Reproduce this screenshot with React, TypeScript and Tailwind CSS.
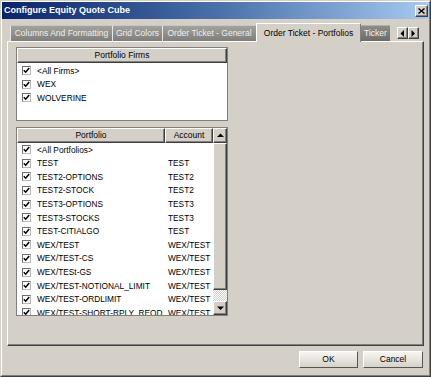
import React from 'react'

const firms = ['<All Firms>', 'WEX', 'WOLVERINE']

const portfolios: [string, string][] = [
  ['<All Portfolios>', ''],
  ['TEST', 'TEST'],
  ['TEST2-OPTIONS', 'TEST2'],
  ['TEST2-STOCK', 'TEST2'],
  ['TEST3-OPTIONS', 'TEST3'],
  ['TEST3-STOCKS', 'TEST3'],
  ['TEST-CITIALGO', 'TEST'],
  ['WEX/TEST', 'WEX/TEST'],
  ['WEX/TEST-CS', 'WEX/TEST'],
  ['WEX/TESt-GS', 'WEX/TEST'],
  ['WEX/TEST-NOTIONAL_LIMIT', 'WEX/TEST'],
  ['WEX/TEST-ORDLIMIT', 'WEX/TEST'],
  ['WEX/TEST-SHORT-RPLY_REQD', 'WEX/TEST'],
]

const tabs = [
  { label: 'Columns And Formatting', w: 'w-[102px]' },
  { label: 'Grid Colors', w: 'w-[50px]' },
  { label: 'Order Ticket - General', w: 'w-[94px]' },
]

const raised =
  'bg-[#d4d0c8] border border-t-white border-l-white border-r-[#404040] border-b-[#404040] shadow-[inset_-1px_-1px_#808080]'

function Check() {
  return (
    <span className="w-[9px] h-[9px] shrink-0 bg-white border border-t-[#6f6f6f] border-l-[#6f6f6f] border-r-[#b8b8b8] border-b-[#b8b8b8] flex items-center justify-center">
      <svg width="7" height="7" viewBox="0 0 7 7">
        <path d="M0.8 3.2 L2.7 5.2 L6.2 1" stroke="#000" strokeWidth="1.5" fill="none" />
      </svg>
    </span>
  )
}

function Arrow({ dir }: { dir: 'up' | 'down' | 'left' | 'right' }) {
  const pts = {
    up: '0,4 3.5,0.5 7,4',
    down: '0,0.5 3.5,4 7,0.5',
    left: '4,0 0.5,3.5 4,7',
    right: '0.5,0 4,3.5 0.5,7',
  }[dir]
  const vert = dir === 'up' || dir === 'down'
  return (
    <svg width={vert ? 7 : 5} height={vert ? 5 : 7} viewBox={vert ? '0 0 7 5' : '0 0 5 7'}>
      <polygon points={pts} fill="#000" />
    </svg>
  )
}

export default function App() {
  return (
    <div className="w-[431px] h-[377px] bg-[#d4d0c8] border border-t-[#d4d0c8] border-l-[#d4d0c8] border-r-[#404040] border-b-[#404040] font-['Liberation_Sans',Arial,sans-serif] text-black overflow-hidden">
      <div className="h-full flex flex-col border border-t-white border-l-white border-r-[#808080] border-b-[#808080]">
        {/* title bar */}
        <div className="h-[17px] shrink-0 flex items-center justify-between bg-gradient-to-r from-[#0a246a] via-[#4a6fa8] to-[#a6caf0] pl-[2px] pr-[1px]">
          <span className="text-white font-bold text-[9px] leading-none">Configure Equity Quote Cube</span>
          <span className={`w-[13px] h-[12px] flex items-center justify-center ${raised}`}>
            <svg width="7" height="6" viewBox="0 0 7 6">
              <path d="M0.5 0.5 L6.5 5.5 M6.5 0.5 L0.5 5.5" stroke="#000" strokeWidth="1.4" />
            </svg>
          </span>
        </div>

        <div className="px-[5px] mt-[4px] flex flex-col">
          {/* tab strip */}
          <div className="h-[18px] flex items-end pl-[3px] text-[8.5px] leading-none">
            {tabs.map((t) => (
              <div
                key={t.label}
                className={`${t.w} h-[16px] flex items-center justify-center bg-gradient-to-b from-[#a3a29d] to-[#7f7e79] text-[#eeeeee] border-l border-l-[#e8e8e8] border-t border-t-[#c8c6c0]`}
              >
                {t.label}
              </div>
            ))}
            <div className="relative z-10 w-[105px] h-[19px] -mb-[1px] flex items-center justify-center bg-[#d4d0c8] border-t border-l border-t-white border-l-white border-r border-r-[#808080]">
              Order Ticket - Portfolios
            </div>
            <div className="w-[29px] h-[16px] flex items-center justify-center bg-gradient-to-b from-[#8e8d88] to-[#6c6b67] text-[#f2f2f2] border-t border-t-[#b0aea8]">
              Ticker
            </div>
            <div className="ml-[7px] mb-[2px] flex">
              <span className={`w-[11px] h-[12px] flex items-center justify-center ${raised}`}>
                <Arrow dir="left" />
              </span>
              <span className={`w-[11px] h-[12px] flex items-center justify-center ${raised}`}>
                <Arrow dir="right" />
              </span>
            </div>
          </div>

          {/* tab panel */}
          <div className="h-[305px] border border-t-white border-l-white border-r-[#404040] border-b-[#404040] shadow-[inset_-1px_-1px_#808080] pt-[5px] pl-[8px] text-[8.5px] leading-none">
            {/* firms */}
            <div className="w-[212px] h-[74px] bg-white border border-[#7f7f7f] flex flex-col overflow-hidden">
              <div className={`h-[15px] shrink-0 flex items-center justify-center ${raised}`}>Portfolio Firms</div>
              <div className="pt-[1px]">
                {firms.map((f) => (
                  <div key={f} className="h-[13.5px] flex items-center pl-[5px] gap-[6px] text-[8.4px]">
                    <Check />
                    <span>{f}</span>
                  </div>
                ))}
              </div>
            </div>

            {/* portfolios */}
            <div className="w-[212px] h-[189px] mt-[6px] bg-white border border-[#7f7f7f] flex overflow-hidden">
              <div className="flex-1 flex flex-col min-w-0">
                <div className="h-[15px] shrink-0 flex">
                  <div className={`w-[148px] flex items-center justify-center ${raised}`}>Portfolio</div>
                  <div className={`flex-1 flex items-center justify-center ${raised}`}>Account</div>
                </div>
                <div className="text-[8.3px]">
                  {portfolios.map(([p, a]) => (
                    <div key={p} className="h-[13.6px] flex items-center">
                      <div className="w-[148px] flex items-center pl-[5px] gap-[6px] whitespace-nowrap">
                        <Check />
                        <span>{p}</span>
                      </div>
                      <div className="pl-[3px] whitespace-nowrap">{a}</div>
                    </div>
                  ))}
                </div>
              </div>
              <div className="w-[14px] shrink-0 flex flex-col bg-[repeating-conic-gradient(#ffffff_0_25%,#d4d0c8_0_50%)] bg-[length:2px_2px]">
                <span className={`h-[15px] shrink-0 flex items-center justify-center ${raised}`}>
                  <Arrow dir="up" />
                </span>
                <span className={`h-[147px] shrink-0 ${raised}`} />
                <span className="flex-1" />
                <span className={`h-[14px] shrink-0 flex items-center justify-center ${raised}`}>
                  <Arrow dir="down" />
                </span>
              </div>
            </div>
          </div>

          {/* buttons */}
          <div className="mt-[5px] pr-[1px] flex justify-end gap-[5px] text-[8.5px] leading-none">
            <button className="w-[59px] h-[17px] flex items-center justify-center bg-gradient-to-b from-[#f7f6f2] to-[#d6d2c8] border border-t-white border-l-white border-r-[#555] border-b-[#555]">
              OK
            </button>
            <button className="w-[60px] h-[17px] flex items-center justify-center bg-gradient-to-b from-[#f7f6f2] to-[#d6d2c8] border border-t-white border-l-white border-r-[#555] border-b-[#555]">
              Cancel
            </button>
          </div>
        </div>
      </div>
    </div>
  )
}
